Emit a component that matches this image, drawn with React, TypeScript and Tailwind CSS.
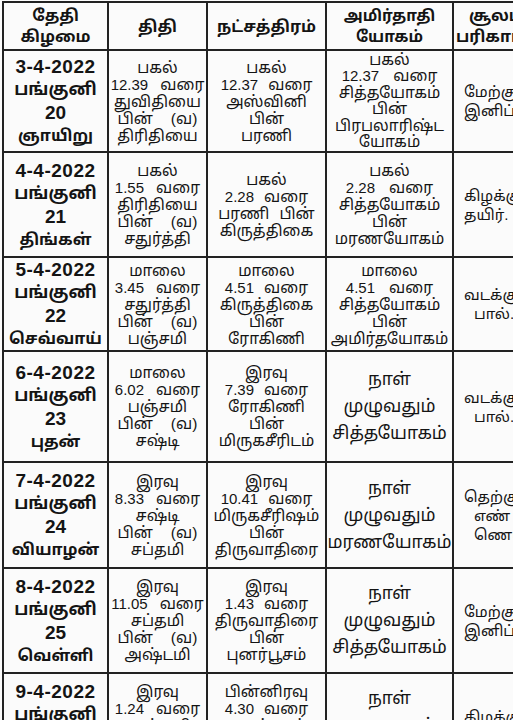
const tamil = "font-['Liberation_Sans','Noto_Sans_Tamil','Lohit_Tamil','Noto_Sans',sans-serif]";

type Line = string[];

interface Row {
  h: string;
  date: string;
  num: string;
  day: string;
  thithi: Line[];
  star: Line[];
  yogam: Line[];
  bigYogam?: boolean;
  soolam: string[];
}

const rows: Row[] = [
  {
    h: "h-[102px]",
    date: "3-4-2022",
    num: "20",
    day: "ஞாயிறு",
    thithi: [["பகல்"], ["12.39", "வரை"], ["துவிதியை"], ["பின்", "(வ)"], ["திரிதியை"]],
    star: [["பகல்"], ["12.37", "வரை"], ["அஸ்வினி"], ["பின்"], ["பரணி"]],
    yogam: [["பகல்"], ["12.37", "வரை"], ["சித்தயோகம்"], ["பின்"], ["பிரபலாரிஷ்ட"], ["யோகம்"]],
    soolam: ["மேற்கு", "இனிப்பு"],
  },
  {
    h: "h-[105px]",
    date: "4-4-2022",
    num: "21",
    day: "திங்கள்",
    thithi: [["பகல்"], ["1.55", "வரை"], ["திரிதியை"], ["பின்", "(வ)"], ["சதுர்த்தி"]],
    star: [["பகல்"], ["2.28", "வரை"], ["பரணி", "பின்"], ["கிருத்திகை"]],
    yogam: [["பகல்"], ["2.28", "வரை"], ["சித்தயோகம்"], ["பின்"], ["மரணயோகம்"]],
    soolam: ["கிழக்கு", "தயிர்."],
  },
  {
    h: "h-[94px]",
    date: "5-4-2022",
    num: "22",
    day: "செவ்வாய்",
    thithi: [["மாலை"], ["3.45", "வரை"], ["சதுர்த்தி"], ["பின்", "(வ)"], ["பஞ்சமி"]],
    star: [["மாலை"], ["4.51", "வரை"], ["கிருத்திகை"], ["பின்"], ["ரோகிணி"]],
    yogam: [["மாலை"], ["4.51", "வரை"], ["சித்தயோகம்"], ["பின்"], ["அமிர்தயோகம்"]],
    soolam: ["வடக்கு", "பால்."],
  },
  {
    h: "h-[111px]",
    date: "6-4-2022",
    num: "23",
    day: "புதன்",
    thithi: [["மாலை"], ["6.02", "வரை"], ["பஞ்சமி"], ["பின்", "(வ)"], ["சஷ்டி"]],
    star: [["இரவு"], ["7.39", "வரை"], ["ரோகிணி"], ["பின்"], ["மிருகசீரிடம்"]],
    yogam: [["நாள்"], ["முழுவதும்"], ["சித்தயோகம்"]],
    bigYogam: true,
    soolam: ["வடக்கு", "பால்."],
  },
  {
    h: "h-[106px]",
    date: "7-4-2022",
    num: "24",
    day: "வியாழன்",
    thithi: [["இரவு"], ["8.33", "வரை"], ["சஷ்டி"], ["பின்", "(வ)"], ["சப்தமி"]],
    star: [["இரவு"], ["10.41", "வரை"], ["மிருகசீரிஷம்"], ["பின்"], ["திருவாதிரை"]],
    yogam: [["நாள்"], ["முழுவதும்"], ["மரணயோகம்"]],
    bigYogam: true,
    soolam: ["தெற்கு", "எண்", "ணெய்."],
  },
  {
    h: "h-[105px]",
    date: "8-4-2022",
    num: "25",
    day: "வெள்ளி",
    thithi: [["இரவு"], ["11.05", "வரை"], ["சப்தமி"], ["பின்", "(வ)"], ["அஷ்டமி"]],
    star: [["இரவு"], ["1.43", "வரை"], ["திருவாதிரை"], ["பின்"], ["புனர்பூசம்"]],
    yogam: [["நாள்"], ["முழுவதும்"], ["சித்தயோகம்"]],
    bigYogam: true,
    soolam: ["மேற்கு", "இனிப்பு"],
  },
  {
    h: "h-[105px]",
    date: "9-4-2022",
    num: "26",
    day: "சனி",
    thithi: [["இரவு"], ["1.24", "வரை"], ["அஷ்டமி"], ["பின்", "(வ)"], ["நவமி"]],
    star: [["பின்னிரவு"], ["4.30", "வரை"], ["புனர்பூசம்"], ["பின்"], ["பூசம்"]],
    yogam: [["நாள்"], ["முழுவதும்"], ["சித்தயோகம்"]],
    bigYogam: true,
    soolam: ["கிழக்கு", "தயிர்."],
  },
];

// numbers like 12.39 sit a touch smaller than the Tamil words beside them
const isNum = (w: string) => /^[0-9.]+$/.test(w);

function Lines({ lines, gap, tight }: { lines: Line[]; gap: string; tight?: boolean }) {
  return (
    <div className={`flex flex-col items-center text-[15.5px] ${tight ? "leading-[16.5px]" : "leading-[17px]"}`}>
      {lines.map((l, i) => (
        <div key={i} className={`flex items-baseline justify-center ${l[1] === "(வ)" ? "gap-x-[18px]" : gap}`}>
          {l.map((w, j) => (
            <span key={j} className={isNum(w) ? "text-[15px]" : ""}>
              {w}
            </span>
          ))}
        </div>
      ))}
    </div>
  );
}

const cell = "border-2 border-[#222] align-middle text-center p-0";

export default function App() {
  return (
    <div className={`w-[513px] h-[720px] overflow-hidden bg-[#fbfbfb] text-[#141414] pl-[2px] pt-[1px] ${tamil}`}>
      <table className="table-fixed border-collapse w-[540px]">
        <colgroup>
          <col className="w-[105px]" />
          <col className="w-[99px]" />
          <col className="w-[119px]" />
          <col className="w-[127px]" />
          <col className="w-[90px]" />
        </colgroup>
        <thead>
          <tr className="h-[48px] font-bold text-[16px] leading-[21px]">
            <th className={cell}>
              <div>தேதி</div>
              <div>கிழமை</div>
            </th>
            <th className={cell}>திதி</th>
            <th className={cell}>நட்சத்திரம்</th>
            <th className={`${cell} text-[15.5px]`}>
              <div>அமிர்தாதி</div>
              <div>யோகம்</div>
            </th>
            <th className={`${cell} text-left pl-[2px]`}>
              <div className="pl-[13px]">சூலம்</div>
              <div>பரிகாரம்</div>
            </th>
          </tr>
        </thead>
        <tbody>
          {rows.map((r) => (
            <tr key={r.date} className={r.h}>
              <td className={cell}>
                <div className="flex flex-col items-center font-bold text-[17px] leading-[23px]">
                  <span className="text-[19px] tracking-[0.5px]">{r.date}</span>
                  <span>பங்குனி</span>
                  <span className="text-[19px]">{r.num}</span>
                  <span className="text-[16px]">{r.day}</span>
                </div>
              </td>
              <td className={cell}>
                <Lines lines={r.thithi} gap="gap-x-[12px]" />
              </td>
              <td className={cell}>
                <Lines lines={r.star} gap="gap-x-[10px]" />
              </td>
              <td className={cell}>
                {r.bigYogam ? (
                  <div className="flex flex-col items-center text-[17.5px] leading-[27px]">
                    {r.yogam.map((l, i) => (
                      <span key={i}>{l[0]}</span>
                    ))}
                  </div>
                ) : (
                  <Lines lines={r.yogam} gap="gap-x-[14px]" tight={r.yogam.length > 5} />
                )}
              </td>
              <td className={`${cell} text-left pl-[10px]`}>
                <div className="flex flex-col items-start text-[15px] leading-[19px]">
                  {r.soolam.map((s, i) => (
                    <span key={i} className={s.length < 6 ? "pl-[10px]" : ""}>
                      {s}
                    </span>
                  ))}
                </div>
              </td>
            </tr>
          ))}
        </tbody>
      </table>
    </div>
  );
}
